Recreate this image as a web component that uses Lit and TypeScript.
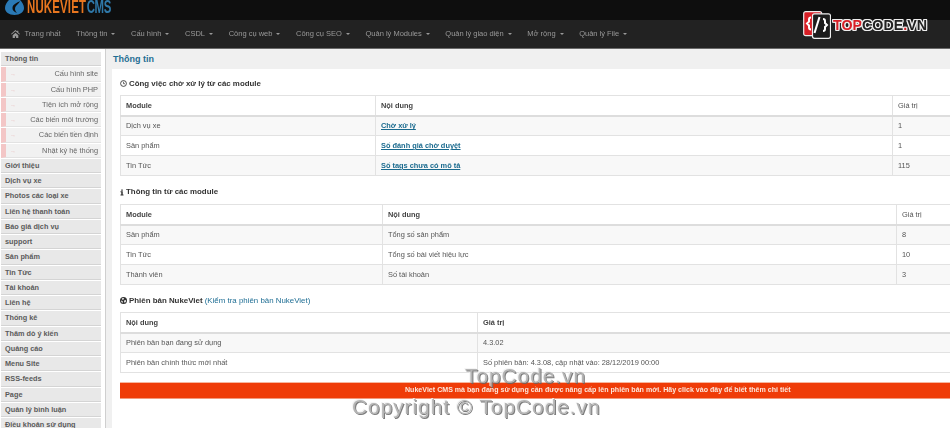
import { LitElement, html, css, svg } from "lit";
import { customElement } from "lit/decorators.js";

const navItems = ["Thông tin", "Cấu hình", "CSDL", "Công cụ web", "Công cụ SEO", "Quản lý Modules", "Quản lý giao diện", "Mở rộng", "Quản lý File"];
const subItems = ["Cấu hình site", "Cấu hình PHP", "Tiện ích mở rộng", "Các biến môi trường", "Các biến tiền định", "Nhật ký hệ thống"];
const mainItems = ["Giới thiệu", "Dịch vụ xe", "Photos các loại xe", "Liên hệ thanh toán", "Báo giá dịch vụ", "support", "Sản phẩm", "Tin Tức", "Tài khoản", "Liên hệ", "Thống kê", "Thăm dò ý kiến", "Quảng cáo", "Menu Site", "RSS-feeds", "Page", "Quản lý bình luận", "Điều khoản sử dụng"];

const homeIcon = svg`<svg class="home" viewBox="0 0 16 14" width="9" height="8"><path fill="#9a9a9a" d="M8 0 0 7l1 1 7-6 7 6 1-1-3-2.6V1h-2v1.7zM3 9v5h4v-3h2v3h4V9L8 4.6z"/></svg>`;
const clockIcon = svg`<svg class="ico" viewBox="0 0 12 12" width="7" height="7"><circle cx="6" cy="6" r="5" fill="none" stroke="#333" stroke-width="1.5"/><path d="M6 3v3.4h2.6" fill="none" stroke="#333" stroke-width="1.2"/></svg>`;
const infoIcon = svg`<svg class="ico" viewBox="0 0 8 12" width="4" height="7"><path fill="#333" d="M2.5 0h3v2.4h-3zM1 3.6h4.5v6.6H7V12H1v-1.8h1.5V5.4H1z"/></svg>`;
const globeIcon = svg`<svg class="ico" viewBox="0 0 12 12" width="7" height="7"><circle cx="6" cy="6" r="6" fill="#333"/><path fill="#fff" d="M3 2.4 5.6 1.6 7 3 5.4 4.6 3.6 4.4zM7.6 5.4l2.8.2-.6 3-2 1.2-.8-2.4zM2 6.2l2.2.6.8 2-1 1.2L2.4 8.4z"/></svg>`;

@customElement("app-root")
export class AppRoot extends LitElement {
  static styles = css`
    :host { display: block; width: 950px; height: 428px; overflow: hidden; position: relative; background: #fff;
      font-family: "Liberation Sans", Arial, sans-serif; font-size: 7.5px; color: #555; }
    * { box-sizing: border-box; }
    .page { filter: blur(0.3px); width: 950px; height: 428px; overflow: hidden; display: flex; flex-direction: column; }
    .top { height: 20px; flex: none; background: #0e0e0e; overflow: hidden; display: flex; padding-left: 5px; gap: 3px; align-items: flex-end; }
    .drop { flex: none; margin-bottom: 5px; }
    .brand { font-weight: 700; font-size: 19px; line-height: 19px; height: 19px; margin-bottom: 4px;
      display: inline-block; transform: scaleX(0.6); transform-origin: left center; white-space: nowrap; letter-spacing: 0.3px; color: #e8761f; }
    .brand span { color: #2f78a8; letter-spacing: -0.6px; margin-left: 1px; }
    nav { height: 29px; flex: none; background: #222; border-bottom: 1px solid #6a6a6a; display: flex; align-items: center; padding: 0 0 1px 11px; gap: 15.6px; color: #999; }
    .nav-item { display: flex; align-items: center; gap: 4px; white-space: nowrap; }
    .nav-item .home { margin-right: 0.5px; }
    .caret { width: 0; height: 0; border-left: 2.5px solid transparent; border-right: 2.5px solid transparent; border-top: 2.5px solid #999; }
    .body { flex: 1; display: flex; min-height: 0; }
    aside { width: 105px; flex: none; padding: 3px 4px 0 1px; display: flex; flex-direction: column; gap: 1px; overflow: hidden; }
    .side-title, .side-main { height: 14.25px; flex: none; line-height: 14px; padding-left: 4px; background: #e5e5e5; border-bottom: 1px solid #cfcfcf; color: #444; font-size: 7.3px; font-weight: 700; white-space: nowrap; opacity: 0.88; }
    .side-sub { height: 14.25px; flex: none; line-height: 14px; background: #f1f1f1; border-left: 5px solid #f3c6c6; border-bottom: 1px solid #e2e2e2; color: #666; font-size: 7.4px; display: flex; justify-content: space-between; padding: 0 3px 0 4px; white-space: nowrap; }
    .arrow { color: #e9bdbd; font-size: 6px; }
    .main { flex: 1; min-width: 0; border-left: 1px solid #cfcfcf; overflow: hidden; display: flex; flex-direction: column; background: #fff; }
    .title { height: 20px; flex: none; background: #f0f0f0; padding-left: 7px; line-height: 20px; font-size: 9px; font-weight: 700; color: #1f6e94; }
    .content { flex: 1; padding: 0 0 0 8px; border-left: 6px solid #f0f0f0; width: 900px; }
    h3 { margin: 0; height: 26px; padding-top: 3px; line-height: 10px; font-size: 7.9px; font-weight: 700; color: #333; display: flex; align-items: center; gap: 2px; white-space: nowrap; }
    h3.h2 { height: 28px; padding-top: 4px; }
    h3.h3 { height: 27px; padding-top: 4px; }
    h3 a { font-weight: 400; color: #1f6e94; }
    .ico { flex: none; }
    table { border-collapse: collapse; table-layout: fixed; }
    td, th { height: 20px; padding: 0 5px; border: 1px solid #e2e2e2; text-align: left; font-size: 7.4px; font-weight: 400; color: #555; white-space: nowrap; }
    th { border-bottom: 2px solid #ddd; font-weight: 700; color: #444; }
    th.plain { font-weight: 400; color: #555; }
    tbody tr:nth-child(odd) td { background: #f8f8f8; }
    td a { color: #1a6a8e; font-weight: 700; text-decoration: underline; }
    .banner { margin-top: 9px; width: 880px; height: 17px; background: #ef3c08; border-top: 1px solid #f7b79f; border-bottom: 1px solid #f29a7c;
      color: #fde7dc; font-weight: 700; font-size: 7.08px; line-height: 15px; padding-left: 285px; white-space: nowrap; }
    .wm { position: absolute; font-family: "Liberation Sans", sans-serif; color: #a8a8a8; white-space: nowrap; text-shadow: 1px 1px 0 #666, -1px -1px 0 #f2f2f2; opacity: 0.85; }
    .wm1 { left: 465px; top: 364px; font-size: 21px; letter-spacing: 0.9px; }
    .wm2 { left: 352px; top: 395px; font-size: 21px; letter-spacing: 0.9px; }
    .tc { position: absolute; left: 803px; top: 11px; display: flex; align-items: center; gap: 2px; }
    .tc-text { font-family: "Liberation Sans", sans-serif; font-weight: 700; font-size: 15px; line-height: 16px; color: #222; white-space: nowrap; display: inline-block; margin-top: -1px;
      transform: scaleX(0.95); transform-origin: left center;
      text-shadow: 1px 0 0 #eee, -1px 0 0 #eee, 0 1px 0 #eee, 0 -1px 0 #eee, 1px 1px 0 #eee, -1px -1px 0 #eee, 1px -1px 0 #eee, -1px 1px 0 #eee; }
    .tc-text b { color: #d81f26; }
  `;

  private table(widths: number[], head: string[], rows: unknown[][], lastPlain = false) {
    return html`<table style="width:${widths.reduce((a, b) => a + b, 0)}px">
      <colgroup>${widths.map((w) => html`<col style="width:${w}px" />`)}</colgroup>
      <thead><tr>${head.map((h, i) => html`<th class=${lastPlain && i === head.length - 1 ? "plain" : ""}>${h}</th>`)}</tr></thead>
      <tbody>${rows.map((r) => html`<tr>${r.map((c) => html`<td>${c}</td>`)}</tr>`)}</tbody>
    </table>`;
  }

  render() {
    const link = (t: string) => html`<a>${t}</a>`;
    return html`<div class="page">
        <div class="top">
          <svg class="drop" viewBox="0 0 19 15" width="19" height="15"><path fill="#2a79b5" d="M9.5-7C7 -2 0 2 0 8c0 4 4 7 9.5 7S19 12 19 8C19 2 12-2 9.5-7z"/><path fill="#0e0e0e" d="M15 1C12 3 8 4 7.5 7.5 7 10 9 12 12 13 9.5 10.5 9.5 8 11 6 12.5 4.2 14.5 3 15 1z"/></svg>
          <span class="brand">NUKEVIET<span>CMS</span></span>
        </div>
        <nav>
          <div class="nav-item">${homeIcon}<span>Trang nhất</span></div>
          ${navItems.map((n) => html`<div class="nav-item"><span>${n}</span><i class="caret"></i></div>`)}
        </nav>
        <div class="body">
          <aside>
            <div class="side-title">Thông tin</div>
            ${subItems.map((s) => html`<div class="side-sub"><span class="arrow">→</span><span>${s}</span></div>`)}
            ${mainItems.map((s) => html`<div class="side-main">${s}</div>`)}
          </aside>
          <div class="main">
            <div class="title">Thông tin</div>
            <div class="content">
              <h3>${clockIcon}<span>Công việc chờ xử lý từ các module</span></h3>
              ${this.table([255, 517, 108], ["Module", "Nội dung", "Giá trị"], [
                ["Dịch vụ xe", link("Chờ xử lý"), "1"],
                ["Sản phẩm", link("Số đánh giá chờ duyệt"), "1"],
                ["Tin Tức", link("Số tags chưa có mô tả"), "115"],
              ], true)}
              <h3 class="h2">${infoIcon}<span>Thông tin từ các module</span></h3>
              ${this.table([262, 514, 104], ["Module", "Nội dung", "Giá trị"], [
                ["Sản phẩm", "Tổng số sản phẩm", "8"],
                ["Tin Tức", "Tổng số bài viết hiệu lực", "10"],
                ["Thành viên", "Số tài khoản", "3"],
              ], true)}
              <h3 class="h3">${globeIcon}<span>Phiên bản NukeViet <a>(Kiểm tra phiên bản NukeViet)</a></span></h3>
              ${this.table([357, 523], ["Nội dung", "Giá trị"], [
                ["Phiên bản bạn đang sử dụng", "4.3.02"],
                ["Phiên bản chính thức mới nhất", "Số phiên bản: 4.3.08, cập nhật vào: 28/12/2019 00:00"],
              ])}
              <div class="banner">NukeViet CMS mà bạn đang sử dụng cần được nâng cấp lên phiên bản mới. Hãy click vào đây để biết thêm chi tiết</div>
            </div>
          </div>
        </div>
      </div>
      <div class="tc">
        <svg viewBox="0 0 28 28" width="28" height="28">
          <rect x="0.7" y="0.7" width="18" height="24" rx="2" fill="#d81f26" stroke="#eee" stroke-width="1.2"/>
          <rect x="9.5" y="2.8" width="18" height="24.5" rx="2" fill="#1c1c1c" stroke="#eee" stroke-width="1.2"/>
          <path d="M8 6.5q-2 0-2 2v2l-2 2 2 2v2q0 2 2 2M20 8q2 0 2 2v2l2 2-2 2v2q0 2-2 2" fill="none" stroke="#fff" stroke-width="2"/>
          <path d="M16.5 6 11.5 22" stroke="#fff" stroke-width="2"/>
        </svg>
        <span class="tc-text"><b>TOP</b>CODE<b>.</b>VN</span>
      </div>
      <div class="wm wm1">TopCode.vn</div>
      <div class="wm wm2">Copyright © TopCode.vn</div>`;
  }
}
